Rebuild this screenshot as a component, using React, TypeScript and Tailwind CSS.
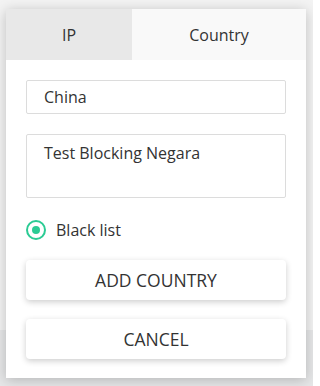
export default function App() {
  return (
    <div
      className="relative w-[313px] h-[386px] overflow-hidden bg-[#f3f3f3]"
      style={{ fontFamily: '"Open Sans", "Liberation Sans", sans-serif' }}
    >
      <div className="absolute left-0 right-0 top-[330px] bottom-0 bg-[#e6e7e8]" />
      <div className="absolute left-[6px] top-[9px] w-[300px] h-[369px] bg-white shadow-[0_2px_12px_rgba(0,0,0,0.22)] flex flex-col">
        <div className="flex h-[51px] text-[16px] text-[#333]">
          <div className="w-[126px] bg-[#e8e8e8] flex items-center justify-center">IP</div>
          <div className="flex-1 bg-[#f9f9f9] flex items-center justify-center">Country</div>
        </div>
        <div className="flex flex-col px-[20px] pt-[20px]">
          <div className="h-[34px] border border-[#dcdcdc] rounded-[2px] flex items-center pl-[17px] text-[16px] text-[#333]">
            China
          </div>
          <div className="mt-[20px] h-[64px] border border-[#dcdcdc] rounded-[2px] pl-[17px] pt-[6px] text-[16px] leading-[24px] text-[#333]">
            Test Blocking Negara
          </div>
          <div className="mt-[22px] flex items-center h-[20px]">
            <div className="w-[20px] h-[20px] rounded-full border-2 border-[#2bcb94] flex items-center justify-center">
              <div className="w-[8px] h-[8px] rounded-full bg-[#2bcb94]" />
            </div>
            <span className="ml-[10px] text-[16px] text-[#333]">Black list</span>
          </div>
          <button className="mt-[20px] h-[40px] rounded-[4px] bg-white shadow-[0_2px_6px_rgba(0,0,0,0.2)] text-[17.5px] text-[#333] uppercase">
            Add Country
          </button>
          <button className="mt-[19px] h-[40px] rounded-[4px] bg-white shadow-[0_2px_6px_rgba(0,0,0,0.2)] text-[17.5px] text-[#333] uppercase">
            Cancel
          </button>
        </div>
      </div>
    </div>
  )
}
